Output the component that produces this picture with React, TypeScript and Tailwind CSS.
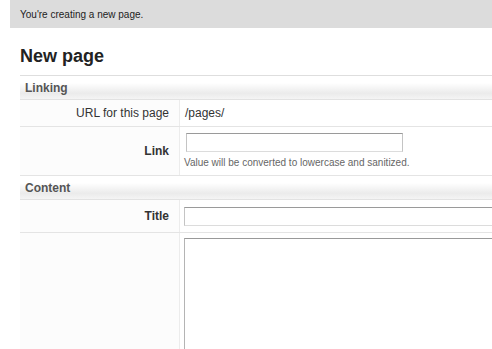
import React from "react";

function SectionHeader({ title }: { title: string }) {
  return (
    <div className="h-[24px] shrink-0 border-b border-[#e2e2e2] bg-[linear-gradient(to_bottom,#ffffff_0%,#ffffff_30%,#ebebeb_75%,#f4f4f4_100%)] pl-[5px] flex items-center text-[12px] font-bold text-[#555]">
      {title}
    </div>
  );
}

function Row({
  label,
  bold,
  height,
  children,
  grow,
}: {
  label: string;
  bold?: boolean;
  height?: string;
  children: React.ReactNode;
  grow?: boolean;
}) {
  return (
    <div className={`flex border-b border-[#e4e4e4] ${height ?? ""} ${grow ? "flex-1" : "shrink-0"}`}>
      <div
        className={`w-[160px] shrink-0 border-r border-[#ececec] bg-[#fcfcfc] pr-[10px] flex items-center justify-end text-[12px] text-[#333] ${
          bold ? "font-bold" : ""
        }`}
      >
        {label}
      </div>
      <div className="flex-1">{children}</div>
    </div>
  );
}

export default function App() {
  return (
    <div className="w-[492px] h-[349px] overflow-hidden bg-white font-['Liberation_Sans',Arial,sans-serif] text-[#333]">
      <div className="ml-[10px] h-[28px] bg-[#dcdcdc] pl-[10px] flex items-center text-[10px] text-[#222] w-[600px]">
        You're creating a new page.
      </div>
      <div className="pl-[20px] w-[620px]">
        <h1 className="mt-[19px] mb-[10px] h-[18px] leading-[18px] text-[18px] font-bold text-[#222]">New page</h1>
        <div className="border-t border-[#dedede] flex flex-col h-[400px]">
          <SectionHeader title="Linking" />
          <Row label="URL for this page" height="h-[27px]">
            <div className="h-full pl-[5px] flex items-center text-[12px] text-[#333]">/pages/</div>
          </Row>
          <Row label="Link" bold height="h-[49px]">
            <div className="pt-[6px] pl-[6px]">
              <input
                type="text"
                className="block w-[217px] h-[19px] border border-t-[#9a9a9a] border-x-[#c4c4c4] border-b-[#dcdcdc] bg-white outline-none"
              />
              <div className="ml-[-2px] mt-[5px] text-[10px] leading-[12px] text-[#666]">
                Value will be converted to lowercase and sanitized.
              </div>
            </div>
          </Row>
          <SectionHeader title="Content" />
          <Row label="Title" bold height="h-[33px]">
            <div className="pt-[7px] pl-[4px]">
              <input
                type="text"
                className="block w-[420px] h-[19px] border border-t-[#9a9a9a] border-x-[#c4c4c4] border-b-[#dcdcdc] bg-white outline-none"
              />
            </div>
          </Row>
          <Row label="" grow>
            <div className="pt-[5px] pl-[4px] h-full">
              <textarea className="block w-[420px] h-[200px] border border-t-[#999] border-x-[#b4b4b4] border-b-[#dcdcdc] bg-white outline-none resize-none" />
            </div>
          </Row>
        </div>
      </div>
    </div>
  );
}
